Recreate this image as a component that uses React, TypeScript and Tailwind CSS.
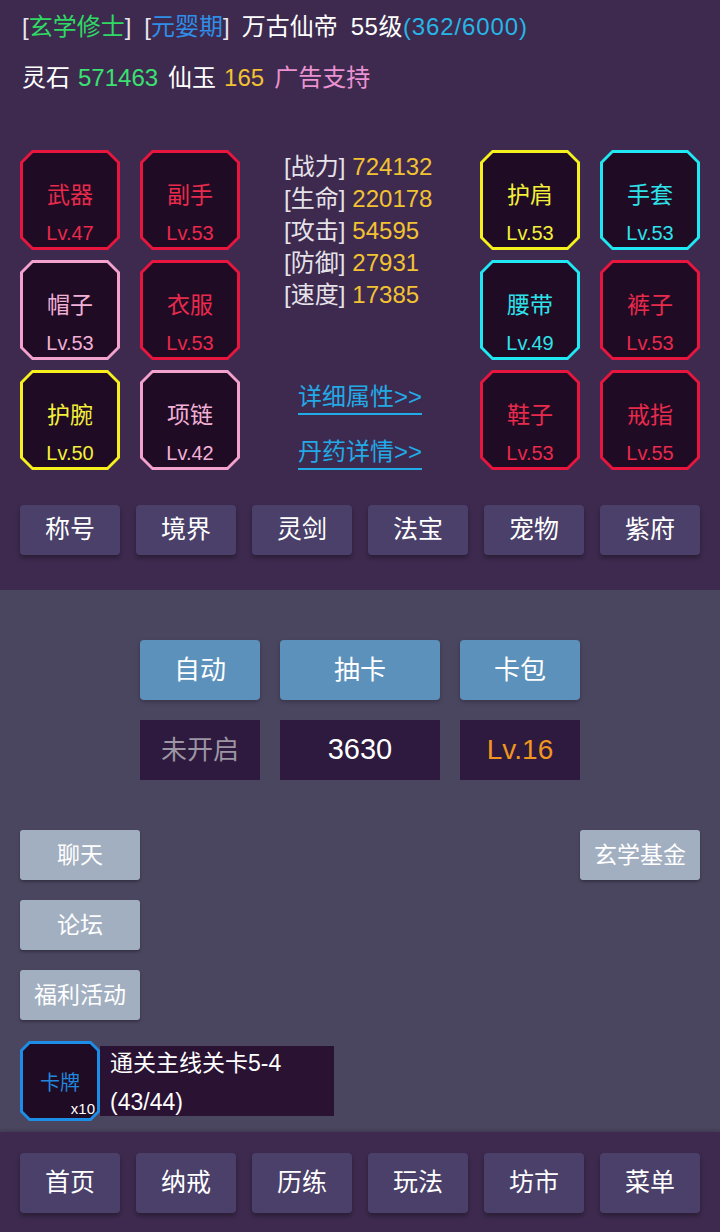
import React from "react";

const FONT = { fontFamily: '"Liberation Sans", "Noto Sans CJK SC", sans-serif' };

type Gear = { name: string; lv: string; c: "red" | "pink" | "yellow" | "cyan" };

const borderCls: Record<string, string> = {
  red: "bg-[#e8163f]",
  pink: "bg-[#f2a2cd]",
  yellow: "bg-[#f6f01c]",
  cyan: "bg-[#1fe8f2]",
};
const textCls: Record<string, string> = {
  red: "text-[#e82a4c]",
  pink: "text-[#f2b0d6]",
  yellow: "text-[#f2f03a]",
  cyan: "text-[#2ee2ea]",
};

function GearBox({ g }: { g: Gear }) {
  return (
    <div
      className={`w-[100px] h-[100px] p-[3px] ${borderCls[g.c]} [clip-path:polygon(12px_0,calc(100%_-_12px)_0,100%_12px,100%_calc(100%_-_12px),calc(100%_-_12px)_100%,12px_100%,0_calc(100%_-_12px),0_12px)]`}
    >
      <div className="w-full h-full bg-[#200b24] flex flex-col items-center [clip-path:polygon(10px_0,calc(100%_-_10px)_0,100%_10px,100%_calc(100%_-_10px),calc(100%_-_10px)_100%,10px_100%,0_calc(100%_-_10px),0_10px)]">
        <div className={`mt-[27px] text-[23px] leading-[30px] ${textCls[g.c]}`}>{g.name}</div>
        <div className={`mt-[11px] text-[20px] leading-[24px] ${textCls[g.c]}`}>{g.lv}</div>
      </div>
    </div>
  );
}

const leftGear: Gear[] = [
  { name: "武器", lv: "Lv.47", c: "red" },
  { name: "副手", lv: "Lv.53", c: "red" },
  { name: "帽子", lv: "Lv.53", c: "pink" },
  { name: "衣服", lv: "Lv.53", c: "red" },
  { name: "护腕", lv: "Lv.50", c: "yellow" },
  { name: "项链", lv: "Lv.42", c: "pink" },
];
const rightGear: Gear[] = [
  { name: "护肩", lv: "Lv.53", c: "yellow" },
  { name: "手套", lv: "Lv.53", c: "cyan" },
  { name: "腰带", lv: "Lv.49", c: "cyan" },
  { name: "裤子", lv: "Lv.53", c: "red" },
  { name: "鞋子", lv: "Lv.53", c: "red" },
  { name: "戒指", lv: "Lv.55", c: "red" },
];

const stats = [
  ["战力", "724132"],
  ["生命", "220178"],
  ["攻击", "54595"],
  ["防御", "27931"],
  ["速度", "17385"],
];

function NavButton({ label, h }: { label: string; h: string }) {
  return (
    <div
      className={`w-[100px] ${h} rounded-[4px] bg-[#4a4069] shadow-[0_3px_4px_rgba(0,0,0,0.3)] flex items-center justify-center text-white text-[25px]`}
    >
      {label}
    </div>
  );
}

function SideButton({ label }: { label: string }) {
  return (
    <div className="w-[120px] h-[50px] rounded-[3px] bg-[#a2afc1] shadow-[0_2px_3px_rgba(0,0,0,0.3)] flex items-center justify-center text-white text-[23px]">
      {label}
    </div>
  );
}

export default function App() {
  return (
    <div className="w-[720px] h-[1232px] flex flex-col overflow-hidden" style={FONT}>
      {/* Top section */}
      <div className="h-[590px] bg-[#3d2a4e] flex flex-col px-[20px]">
        <div className="mt-[12px] h-[30px] flex items-center text-[24px] text-[#e8e4ee] pl-[2px]">
          <span>[</span>
          <span className="text-[#2fd964]">玄学修士</span>
          <span>]</span>
          <span className="ml-[13px]">[</span>
          <span className="text-[#2f8ee8]">元婴期</span>
          <span>]</span>
          <span className="ml-[12px] text-white">万古仙帝</span>
          <span className="ml-[13px] text-white tracking-[0.5px]">55级</span>
          <span className="text-[#27b5e6] tracking-[0.9px]">(362/6000)</span>
        </div>
        <div className="mt-[21px] h-[30px] flex items-center text-[24px] text-white pl-[2px]">
          <span>灵石</span>
          <span className="ml-[8px] text-[#3be072]">571463</span>
          <span className="ml-[10px]">仙玉</span>
          <span className="ml-[8px] text-[#f2c233]">165</span>
          <span className="ml-[10px] text-[#ec92d2]">广告支持</span>
        </div>

        <div className="mt-[57px] flex">
          <div className="grid grid-cols-2 gap-x-[20px] gap-y-[10px] w-[220px]">
            {leftGear.map((g) => (
              <GearBox key={g.name} g={g} />
            ))}
          </div>
          <div className="flex-1 flex flex-col pl-[44px] pt-[1px]">
            <div className="flex flex-col">
              {stats.map(([k, v]) => (
                <div key={k} className="h-[32px] flex items-center text-[24px] text-[#e6e2ea]">
                  <span>[{k}]</span>
                  <span className="ml-[7px] text-[#f2c233]">{v}</span>
                </div>
              ))}
            </div>
            <div className="mt-[71px] ml-[14px] flex flex-col items-start">
              <div className="text-[24px] leading-[30px] text-[#22aae6] border-b-[2px] border-[#22aae6] pb-[1px]">
                详细属性&gt;&gt;
              </div>
              <div className="mt-[22px] text-[24px] leading-[30px] text-[#22aae6] border-b-[2px] border-[#22aae6] pb-[1px]">
                丹药详情&gt;&gt;
              </div>
            </div>
          </div>
          <div className="grid grid-cols-2 gap-x-[20px] gap-y-[10px] w-[220px]">
            {rightGear.map((g) => (
              <GearBox key={g.name} g={g} />
            ))}
          </div>
        </div>

        <div className="mt-[35px] flex justify-between">
          {["称号", "境界", "灵剑", "法宝", "宠物", "紫府"].map((t) => (
            <NavButton key={t} label={t} h="h-[50px]" />
          ))}
        </div>
      </div>

      {/* Middle section */}
      <div className="flex-1 bg-[#4b4660] flex flex-col px-[20px]">
        <div className="mt-[50px] flex justify-center gap-[20px]">
          <div className="w-[120px] h-[60px] rounded-[4px] bg-[#5b91bb] shadow-[0_2px_4px_rgba(0,0,0,0.25)] flex items-center justify-center text-white text-[26px]">
            自动
          </div>
          <div className="w-[160px] h-[60px] rounded-[4px] bg-[#5b91bb] shadow-[0_2px_4px_rgba(0,0,0,0.25)] flex items-center justify-center text-white text-[26px]">
            抽卡
          </div>
          <div className="w-[120px] h-[60px] rounded-[4px] bg-[#5b91bb] shadow-[0_2px_4px_rgba(0,0,0,0.25)] flex items-center justify-center text-white text-[26px]">
            卡包
          </div>
        </div>
        <div className="mt-[20px] flex justify-center gap-[20px]">
          <div className="w-[120px] h-[60px] bg-[#2d1a3e] flex items-center justify-center text-[#9c95a3] text-[26px]">
            未开启
          </div>
          <div className="w-[160px] h-[60px] bg-[#2d1a3e] flex items-center justify-center text-white text-[29px]">
            3630
          </div>
          <div className="w-[120px] h-[60px] bg-[#2d1a3e] flex items-center justify-center text-[#f0951e] text-[28px]">
            Lv.16
          </div>
        </div>

        <div className="mt-[50px] flex justify-between">
          <div className="flex flex-col gap-[20px]">
            <SideButton label="聊天" />
            <SideButton label="论坛" />
            <SideButton label="福利活动" />
          </div>
          <div>
            <SideButton label="玄学基金" />
          </div>
        </div>

        <div className="mt-[21px] flex items-center">
          <div className="w-[80px] h-[80px] p-[3px] bg-[#1c8ee8] [clip-path:polygon(9px_0,calc(100%_-_9px)_0,100%_9px,100%_calc(100%_-_9px),calc(100%_-_9px)_100%,9px_100%,0_calc(100%_-_9px),0_9px)]">
            <div className="relative w-full h-full bg-[#200b24] flex items-center justify-center [clip-path:polygon(7px_0,calc(100%_-_7px)_0,100%_7px,100%_calc(100%_-_7px),calc(100%_-_7px)_100%,7px_100%,0_calc(100%_-_7px),0_7px)]">
              <span className="text-[#2088dc] text-[20px] mt-[4px]">卡牌</span>
              <span className="absolute right-[2px] bottom-[0px] text-white text-[15px] leading-[18px]">x10</span>
            </div>
          </div>
          <div className="w-[234px] h-[70px] bg-[#2a1233] flex flex-col pl-[10px] text-white text-[23px]">
            <div className="leading-[34px]">通关主线关卡5-4</div>
            <div className="leading-[34px] mt-[5px]">(43/44)</div>
          </div>
        </div>
      </div>

      {/* Bottom bar */}
      <div className="h-[100px] bg-[#3d2a4e] flex justify-between px-[20px] pt-[21px] shadow-[0_-2px_3px_rgba(0,0,0,0.15)]">
        {["首页", "纳戒", "历练", "玩法", "坊市", "菜单"].map((t) => (
          <NavButton key={t} label={t} h="h-[60px]" />
        ))}
      </div>
    </div>
  );
}
